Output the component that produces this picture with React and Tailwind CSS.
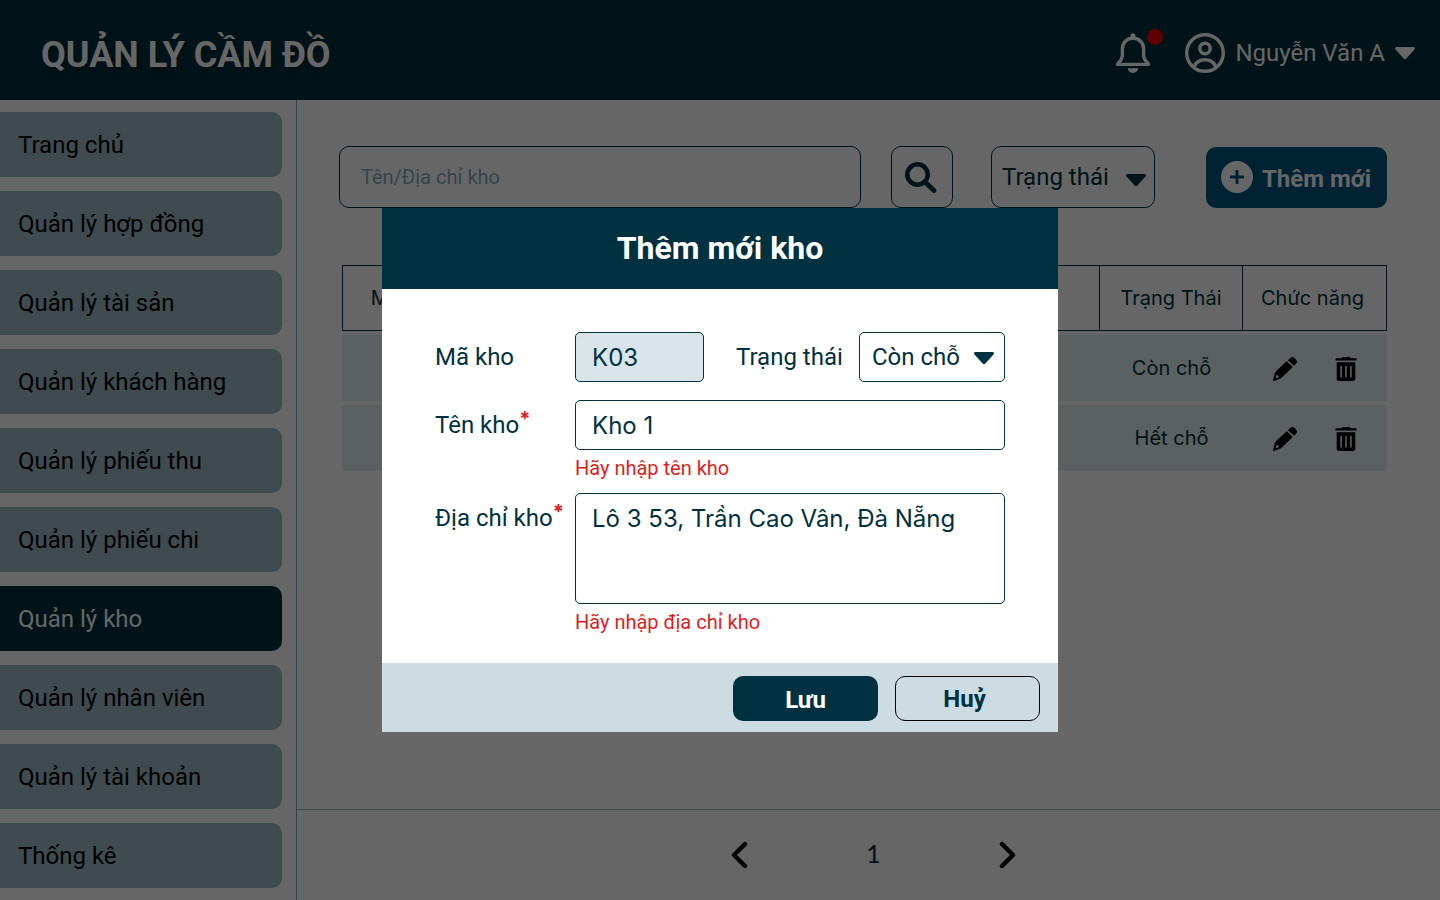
import React from "react";
import { FaPlus } from "react-icons/fa";

const NAV = [
  "Trang chủ",
  "Quản lý hợp đồng",
  "Quản lý tài sản",
  "Quản lý khách hàng",
  "Quản lý phiếu thu",
  "Quản lý phiếu chi",
  "Quản lý kho",
  "Quản lý nhân viên",
  "Quản lý tài khoản",
  "Thống kê",
];

const ROWS = [
  { id: "K01", name: "Kho 1", address: "Đà Nẵng", status: "Còn chỗ" },
  { id: "K02", name: "Kho 2", address: "Đà Nẵng", status: "Hết chỗ" },
];

function Caret({ className }) {
  return (
    <svg viewBox="0 0 20 12" className={className} fill="currentColor" aria-hidden="true">
      <path d="M1.6 0h16.8c1.5 0 2.1 1.6 1.1 2.6l-8.1 8.8c-.8.8-2 .8-2.8 0L.5 2.6C-.5 1.6.1 0 1.6 0z" />
    </svg>
  );
}

function BellIcon() {
  return (
    <svg viewBox="0 0 36 40" className="h-10 w-9" aria-hidden="true">
      <path
        d="M18 5.200c-6.100 0-10.600 4.400-10.600 10.600v6.400c0 2-.6 3.600-1.800 5.200L2.400 31.400h31.200l-3.200-4c-1.200-1.600-1.800-3.200-1.800-5.200v-6.400c0-6.200-4.500-10.600-10.600-10.600z"
        fill="none"
        stroke="currentColor"
        strokeWidth="3.400"
        strokeLinejoin="round"
      />
      <path d="M15.500 4.500V2.800a2.500 2.500 0 0 1 5 0v1.700z" fill="currentColor" />
      <path d="M12.800 35.200h10.400a5.200 4.800 0 0 1-10.400 0z" fill="currentColor" />
    </svg>
  );
}

function UserIcon() {
  return (
    <svg viewBox="0 0 40 40" className="size-10" fill="none" stroke="currentColor" strokeWidth="3.400" aria-hidden="true">
      <circle cx="20" cy="20" r="18.300" />
      <circle cx="20" cy="15.500" r="5.200" />
      <path d="M9.300 33.800c1.800-4.600 5.700-7 10.700-7s8.900 2.400 10.700 7" />
    </svg>
  );
}

function SearchIcon() {
  return (
    <svg viewBox="0 0 32 32" className="size-8" fill="none" stroke="currentColor" aria-hidden="true">
      <circle cx="12.500" cy="13.500" r="10.200" strokeWidth="4.600" />
      <path d="M20.500 21.500l8.500 8" strokeWidth="4.800" strokeLinecap="round" />
    </svg>
  );
}

function PencilIcon() {
  return (
    <svg viewBox="0 0 24 24" className="size-6" fill="currentColor" aria-hidden="true">
      <path d="M16.500 1.700l1-.9c1.200-1 2.900-1 4.100.1l1.500 1.500c1.100 1.200 1.200 2.900.1 4.100l-2.100 2.300-6.200-5.600z" />
      <path
        fillRule="evenodd"
        d="M13.700 4.300l6 5.600L8.600 20.700c-.4.400-.8.600-1.300.8L.900 23.900c-.6.200-1-.2-.8-.8l1.800-7.200c.1-.5.400-1 .8-1.400zM3.600 17.300l-.9 4.100 3.500-1.300-.6-1.400-1.400-.4z"
      />
    </svg>
  );
}

function TrashIcon() {
  return (
    <svg viewBox="0 0 22 24" className="h-6 w-[22px]" fill="currentColor" aria-hidden="true">
      <path d="M7.300 0h7.400l1 1.300h5c.5 0 .8.300.8.800v1.500H.500V2.100c0-.5.300-.8.800-.8h5z" />
      <path
        fillRule="evenodd"
        d="M1.700 5.300h18.600v16.400c0 1.300-1 2.300-2.300 2.300H4c-1.300 0-2.300-1-2.300-2.300zM5.300 9v11.600h1.600V9zm4.900 0v11.600h1.600V9zm4.900 0v11.600h1.600V9z"
      />
    </svg>
  );
}

function Chevron({ d }) {
  return (
    <svg viewBox="0 0 18 28" className="h-7 w-[18px]" fill="none" stroke="currentColor" strokeWidth="4.400" strokeLinecap="round" strokeLinejoin="round" aria-hidden="true">
      <path d={d} />
    </svg>
  );
}

function Header() {
  return (
    <header className="flex h-[100px] shrink-0 items-center justify-between bg-[#003140] pr-[25px] pl-[41px] text-white">
      <h1 className="pt-2.5 text-4xl font-bold [text-shadow:0_4px_4px_rgba(0,0,0,0.25)]">QUẢN LÝ CẦM ĐỒ</h1>
      <div className="flex items-center pt-1.5">
        <button type="button" aria-label="Thông báo" className="relative mr-[34px]">
          <BellIcon />
          <span className="absolute -top-1 -right-3 size-4 rounded-full bg-[#eb0000]" />
        </button>
        <button type="button" className="flex items-center gap-2.5 text-2xl">
          <UserIcon />
          Nguyễn Văn A
          <Caret className="h-3 w-5" />
        </button>
      </div>
    </header>
  );
}

function Sidebar() {
  return (
    <nav className="w-[297px] shrink-0 border-r border-[#7ba6b8] pt-3 pr-3.5">
      <ul className="flex flex-col gap-3.5">
        {NAV.map((item) => (
          <li key={item}>
            <a
              href="#"
              className={
                item === "Quản lý kho"
                  ? "flex h-[65px] items-center rounded-r-[10px] bg-[#003140] pl-[18px] text-2xl text-white"
                  : "flex h-[65px] items-center rounded-r-[10px] bg-[#9ebbc6] pl-[18px] text-2xl text-black"
              }
            >
              {item}
            </a>
          </li>
        ))}
      </ul>
    </nav>
  );
}

function Toolbar() {
  return (
    <div className="flex items-center">
      <input
        aria-label="Tên/Địa chỉ kho"
        placeholder="Tên/Địa chỉ kho"
        className="h-[62px] min-w-0 flex-1 rounded-[10px] border border-[#003140] px-[21px] text-xl placeholder:text-[#86adbc]"
      />
      <button type="button" aria-label="Tìm kiếm" className="ml-[30px] flex h-[62px] w-[62px] items-center justify-center rounded-[10px] border border-[#003140] pr-0.5 text-[#003140]">
        <SearchIcon />
      </button>
      <div className="relative ml-[38px] w-[164px] text-[#003140]">
        <select aria-label="Trạng thái" className="h-[62px] w-full appearance-none rounded-[10px] border border-[#003140] pl-2.5 text-2xl">
          <option>Trạng thái</option>
        </select>
        <Caret className="pointer-events-none absolute top-7 right-[9px] h-3 w-5" />
      </div>
      <button type="button" className="ml-[51px] flex h-[61px] w-[181px] items-center gap-[9px] rounded-[10px] bg-[#005580] pl-[15px] text-2xl font-bold text-white">
        <span className="flex size-8 items-center justify-center rounded-full bg-white text-[#005580]">
          <FaPlus className="size-4" />
        </span>
        <span className="pt-[3px]">Thêm mới</span>
      </button>
    </div>
  );
}

function WarehouseTable() {
  const th = "h-[66px] border-y border-r border-[#003140] text-center font-normal";
  return (
    <div className="mt-[53px] pl-[3px]">
      <table className="w-full table-fixed border-separate border-spacing-x-0 border-spacing-y-1 font-[Inter,sans-serif] text-xl text-[#003140]">
        <colgroup>
          <col className="w-[127px]" />
          <col className="w-[220px]" />
          <col />
          <col className="w-[143px]" />
          <col className="w-[144px]" />
        </colgroup>
        <thead>
          <tr>
            <th className="h-[66px] border border-[#003140] text-center font-normal">Mã kho</th>
            <th className={th}>Tên kho</th>
            <th className={th}>Địa chỉ</th>
            <th className={th}>Trạng Thái</th>
            <th className={`${th} pr-1`}>Chức năng</th>
          </tr>
        </thead>
        <tbody className="text-center">
          {ROWS.map((row) => (
            <tr key={row.id} className="bg-[#e4eff2]">
              <td className="h-[66px]">{row.id}</td>
              <td>{row.name}</td>
              <td>{row.address}</td>
              <td>{row.status}</td>
              <td>
                <div className="flex items-center justify-center gap-[38px] pt-0.5 text-black">
                  <button type="button" aria-label="Sửa">
                    <PencilIcon />
                  </button>
                  <button type="button" aria-label="Xoá">
                    <TrashIcon />
                  </button>
                </div>
              </td>
            </tr>
          ))}
        </tbody>
      </table>
    </div>
  );
}

function Pagination() {
  return (
    <div className="flex h-[91px] items-center justify-center gap-[119px] border-t border-[#9ebbc6] pl-2.5">
      <button type="button" aria-label="Trang trước">
        <Chevron d="M15 3L4 14l11 11" />
      </button>
      <span className="pb-0.5 font-[Lato,sans-serif] text-2xl font-medium text-[#003140]">1</span>
      <button type="button" aria-label="Trang sau">
        <Chevron d="M3 3l11 11L3 25" />
      </button>
    </div>
  );
}

function FieldLabel({ htmlFor, required, children }) {
  return (
    <label htmlFor={htmlFor} className="flex h-[50px] w-[140px] shrink-0 items-center text-2xl">
      {children}
      {required && <span className="-mt-3 font-[Inter,sans-serif] text-xl font-bold text-[#dc1f1f]">*</span>}
    </label>
  );
}

function AddWarehouseDialog() {
  const field = "rounded-[5px] border border-[#003140] px-4 font-[Inter,sans-serif] text-2xl";
  return (
    <div className="fixed inset-0 flex items-start justify-center bg-black/60 pt-[208px]">
      <form role="dialog" aria-modal="true" aria-labelledby="dialog-title" className="w-full max-w-[676px] bg-white text-[#003140]">
        <h2 id="dialog-title" className="flex h-[81px] items-center justify-center bg-[#003140] pb-0.5 text-[32px] font-bold text-white">
          Thêm mới kho
        </h2>
        <div className="px-[53px] pt-[43px] pb-[27px]">
          <div className="flex items-center">
            <FieldLabel htmlFor="code">Mã kho</FieldLabel>
            <input id="code" readOnly defaultValue="K03" className={`${field} h-[50px] w-[129px] bg-[#dae5ea]`} />
            <label htmlFor="status" className="ml-8 text-2xl">
              Trạng thái
            </label>
            <div className="relative ml-auto w-[146px]">
              <select id="status" className="h-[50px] w-full appearance-none rounded-[5px] border border-[#003140] pl-3 text-2xl">
                <option>Còn chỗ</option>
                <option>Hết chỗ</option>
              </select>
              <Caret className="pointer-events-none absolute top-5 right-[11px] h-3 w-5" />
            </div>
          </div>
          <div className="mt-[18px] flex">
            <FieldLabel htmlFor="name" required>
              Tên kho
            </FieldLabel>
            <div className="min-w-0 flex-1">
              <input id="name" defaultValue="Kho 1" className={`${field} block h-[50px] w-full`} />
              <p className="mt-1 text-xl text-[#dc1f1f]">Hãy nhập tên kho</p>
            </div>
          </div>
          <div className="mt-[11px] flex">
            <FieldLabel htmlFor="address" required>
              Địa chỉ kho
            </FieldLabel>
            <div className="min-w-0 flex-1">
              <textarea id="address" defaultValue="Lô 3 53, Trần Cao Vân, Đà Nẵng" className={`${field} block h-[111px] w-full resize-none py-[9px]`} />
              <p className="mt-1 text-xl text-[#dc1f1f]">Hãy nhập địa chỉ kho</p>
            </div>
          </div>
        </div>
        <div className="flex h-[69px] items-center justify-end gap-[17px] bg-[#ccdce2] pt-0.5 pr-[18px]">
          <button type="submit" className="h-[45px] w-[145px] rounded-[10px] bg-[#003140] pt-0.5 text-2xl font-bold text-white">
            Lưu
          </button>
          <button type="button" className="h-[45px] w-[145px] rounded-[10px] border border-black pr-1.5 text-2xl font-bold">
            Huỷ
          </button>
        </div>
      </form>
    </div>
  );
}

export default function App() {
  return (
    <div className="flex h-screen flex-col overflow-hidden bg-white font-[Roboto,sans-serif]">
      <Header />
      <div className="flex min-h-0 flex-1">
        <Sidebar />
        <main className="flex min-w-0 flex-1 flex-col">
          <div className="flex-1 pt-[46px] pr-[53px] pl-[42px]">
            <Toolbar />
            <WarehouseTable />
          </div>
          <Pagination />
        </main>
      </div>
      <AddWarehouseDialog />
    </div>
  );
}
